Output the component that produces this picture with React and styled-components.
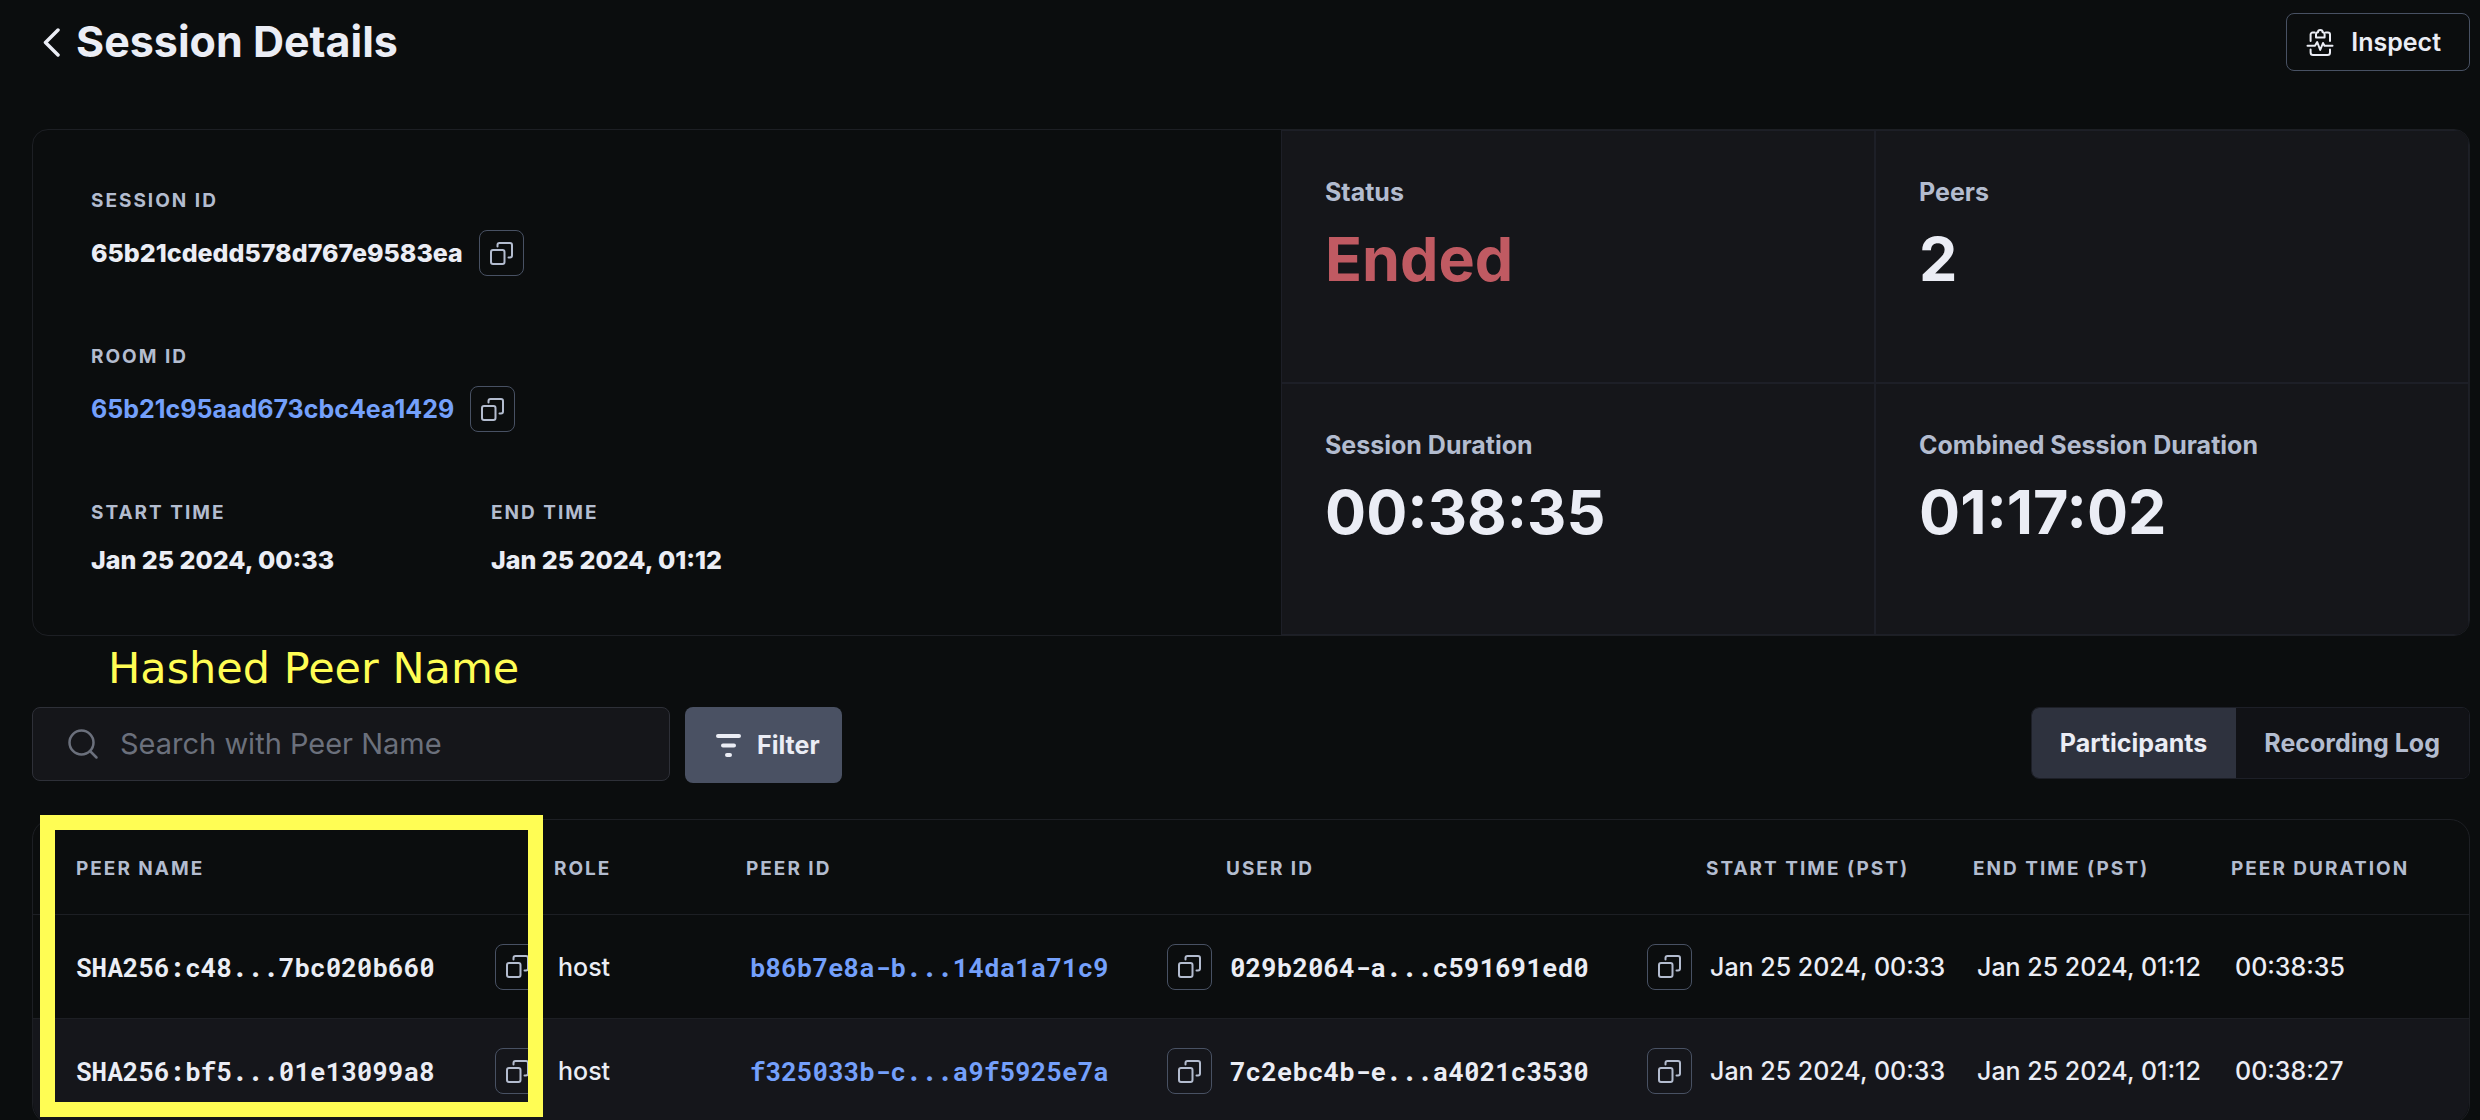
import React from "react";
import styled, { createGlobalStyle } from "styled-components";

const Global = createGlobalStyle`
  * { box-sizing: border-box; }
  body { margin: 0; background: #0b0d0e; }
  button, input { font: inherit; color: inherit; }
`;

const Page = styled.main`
  height: 100vh;
  overflow: auto;
  scrollbar-width: none;
  padding: 13px 10px 40px 32px;
  background: #0b0d0e;
  color: #ebedf5;
  font-family: Inter, sans-serif;
  font-size: 25px;
  line-height: 32px;
`;

const Header = styled.header`
  display: flex;
  justify-content: space-between;
  align-items: flex-start;
  margin-bottom: 58px;
`;

const TitleGroup = styled.div`
  display: flex;
  align-items: center;
  gap: 14px;
  padding-left: 10px;
`;

const BackButton = styled.button`
  display: flex;
  padding: 0;
  border: 0;
  background: none;
`;

const Title = styled.h1`
  margin: 0;
  font-size: 43px;
  line-height: 56px;
  font-weight: 700;
`;

const InspectButton = styled.button`
  display: flex;
  align-items: center;
  gap: 17px;
  height: 58px;
  padding: 0 28px 0 19px;
  border: 1px solid #485163;
  border-radius: 8px;
  background: none;
  font-weight: 600;
`;

const Summary = styled.section`
  display: grid;
  grid-template-columns: 1248fr 1188fr;
  border: 1px solid #1d1f24;
  border-radius: 16px;
  overflow: hidden;
`;

const Details = styled.div`
  display: flex;
  flex-direction: column;
  gap: 69px;
  padding: 59px 58px 57px;
`;

const Label = styled.div`
  font-size: 19px;
  line-height: 24px;
  font-weight: 700;
  letter-spacing: 2px;
  color: #b3bccf;
`;

const Value = styled.div`
  display: flex;
  align-items: center;
  gap: 16px;
  min-height: ${(p) => (p.$plain ? 36 : 46)}px;
  font-weight: 800;
`;

const Field = styled.div`
  display: flex;
  flex-direction: column;
  gap: 17px;
`;

const Times = styled.div`
  display: grid;
  grid-template-columns: 400px 400px;
`;

const Link = styled.a`
  color: #74a0fb;
  font-weight: 700;
  text-decoration: none;
`;

const CopyBox = styled.button`
  display: flex;
  flex: none;
  align-items: center;
  justify-content: center;
  width: 45px;
  height: 46px;
  padding: 0;
  border: 1px solid #485163;
  border-radius: 8px;
  background: none;
  color: #b3bccf;
`;

const Stats = styled.div`
  display: grid;
  grid-template-columns: 1fr 1fr;
`;

const Stat = styled.div`
  padding: 45px 43px;
  border: 1px solid #1d1f27;
  background: #15161a;
`;

const StatLabel = styled.div`
  font-weight: 700;
  color: #b3bccf;
`;

const StatValue = styled.div`
  margin-top: 11px;
  font-size: 61px;
  line-height: 80px;
  font-weight: 700;
  color: ${(p) => (p.$ended ? "#c05a62" : "#ebedf5")};
`;

const Caption = styled.p`
  margin: 5px 0 12px;
  padding-left: 76px;
  font-family: "DejaVu Sans", Verdana, sans-serif;
  font-size: 43px;
  line-height: 54px;
  color: #fffd54;
`;

const Toolbar = styled.div`
  display: flex;
  align-items: flex-start;
  gap: 15px;
  margin-bottom: 36px;
`;

const SearchBox = styled.label`
  display: flex;
  align-items: center;
  gap: 21px;
  width: 638px;
  height: 74px;
  padding: 0 34px;
  border: 1px solid #2e3038;
  border-radius: 8px;
  background: #15161a;
  color: #6b707c;
`;

const SearchInput = styled.input`
  flex: 1;
  min-width: 0;
  padding: 0;
  border: 0;
  outline: 0;
  background: none;
  font-size: 29px;
  &::placeholder {
    color: #6b707c;
    opacity: 1;
  }
`;

const FilterButton = styled.button`
  display: flex;
  align-items: center;
  gap: 16px;
  height: 76px;
  padding: 0 22px 0 31px;
  border: 0;
  border-radius: 8px;
  background: #4a5163;
  font-weight: 700;
`;

const Tabs = styled.div`
  display: flex;
  height: 72px;
  margin-left: auto;
  border: 1px solid #1d1f27;
  border-radius: 8px;
  overflow: hidden;
`;

const Tab = styled.button`
  padding: 0 29px 0 28px;
  border: 0;
  background: ${(p) => (p.$active ? "#2e323e" : "#111216")};
  color: ${(p) => (p.$active ? "#ebedf5" : "#b3bccf")};
  font-weight: 700;
`;

const TableCard = styled.section`
  position: relative;
  border: 1px solid #1d1f24;
  border-radius: 20px;
`;

const Table = styled.table`
  width: 100%;
  table-layout: fixed;
  border-collapse: separate;
  border-spacing: 0;
`;

const Th = styled.th`
  width: ${(p) => p.$width}px;
  height: 95px;
  padding: 4px 0 0 12px;
  border-bottom: 1px solid #1d1f24;
  text-align: left;
  white-space: nowrap;
  font-size: 19px;
  line-height: 24px;
  font-weight: 700;
  letter-spacing: 2px;
  color: #b3bccf;
  &:first-child {
    padding-left: 43px;
  }
`;

const Row = styled.tr`
  &:last-child td {
    border-bottom: 0;
    background: #15161b;
  }
  &:last-child td:first-child {
    border-bottom-left-radius: 20px;
  }
  &:last-child td:last-child {
    border-bottom-right-radius: 20px;
  }
`;

const Td = styled.td`
  height: 104px;
  padding: 0 2px 0 16px;
  border-bottom: 1px solid #1d1f24;
  white-space: nowrap;
  font-weight: 500;
  &:first-child {
    padding-left: 43px;
  }
`;

const Ident = styled.div`
  display: flex;
  align-items: center;
  justify-content: space-between;
  font-family: "Roboto Mono", "DejaVu Sans Mono", monospace;
  font-size: 26px;
  font-weight: 700;
`;

const Highlight = styled.div`
  position: absolute;
  top: -5px;
  left: 7px;
  width: 503px;
  height: 302px;
  border: 15px solid #fffd54;
  pointer-events: none;
`;

function CopyButton() {
  return (
    <CopyBox type="button" aria-label="Copy">
      <svg width="23" height="23" viewBox="0 0 23 23" fill="none" stroke="currentColor" strokeWidth="2" strokeLinecap="round" strokeLinejoin="round" aria-hidden="true">
        <rect x="1" y="8" width="13.500" height="14" rx="2" />
        <path d="M7.500 4.500V3a2 2 0 0 1 2-2H20a2 2 0 0 1 2 2v10.500a2 2 0 0 1-2 2h-1.500" />
      </svg>
    </CopyBox>
  );
}

const columns = [
  ["Peer Name", 509],
  ["Role", 192],
  ["Peer ID", 480],
  ["User ID", 480],
  ["Start Time (PST)", 267],
  ["End Time (PST)", 258],
  ["Peer Duration", 250],
];

const peers = [
  {
    name: "SHA256:c48...7bc020b660",
    role: "host",
    peerId: "b86b7e8a-b...14da1a71c9",
    userId: "029b2064-a...c591691ed0",
    start: "Jan 25 2024, 00:33",
    end: "Jan 25 2024, 01:12",
    duration: "00:38:35",
  },
  {
    name: "SHA256:bf5...01e13099a8",
    role: "host",
    peerId: "f325033b-c...a9f5925e7a",
    userId: "7c2ebc4b-e...a4021c3530",
    start: "Jan 25 2024, 00:33",
    end: "Jan 25 2024, 01:12",
    duration: "00:38:27",
  },
];

const stats = [
  ["Status", "Ended"],
  ["Peers", "2"],
  ["Session Duration", "00:38:35"],
  ["Combined Session Duration", "01:17:02"],
];

export default function App() {
  return (
    <Page>
      <Global />
      <Header>
        <TitleGroup>
          <BackButton type="button" aria-label="Back">
            <svg width="20" height="32" viewBox="0 0 20 32" fill="none" stroke="currentColor" strokeWidth="3.500" strokeLinecap="round" strokeLinejoin="round" aria-hidden="true">
              <path d="M16 5 3.500 17.500 16 30" />
            </svg>
          </BackButton>
          <Title>Session Details</Title>
        </TitleGroup>
        <InspectButton type="button">
          <svg width="28" height="30" viewBox="0 0 28 30" fill="none" stroke="currentColor" strokeWidth="2" strokeLinecap="round" strokeLinejoin="round" aria-hidden="true">
            <path d="M4.600 14V7.500a2 2 0 0 1 2-2h2.200M19.800 5.500h2.200a2 2 0 0 1 2 2V14M4.600 22.500v3a2.500 2.500 0 0 0 2.500 2.500h14.400a2.500 2.500 0 0 0 2.500-2.500v-3" />
            <path d="M10 10.500h8.600V7.500a2.200 2.200 0 0 0-2-2.200 2.300 2.300 0 0 0-4.600 0 2.200 2.200 0 0 0-2 2.200z" />
            <path d="M1.500 18.700H9l2.200-3.700 3 8 2.800-7 1.500 2.700h8" />
          </svg>
          Inspect
        </InspectButton>
      </Header>

      <Summary>
        <Details>
          <Field>
            <Label>SESSION ID</Label>
            <Value>
              65b21cdedd578d767e9583ea
              <CopyButton />
            </Value>
          </Field>
          <Field>
            <Label>ROOM ID</Label>
            <Value>
              <Link href="#room">65b21c95aad673cbc4ea1429</Link>
              <CopyButton />
            </Value>
          </Field>
          <Times>
            <Field>
              <Label>START TIME</Label>
              <Value $plain>Jan 25 2024, 00:33</Value>
            </Field>
            <Field>
              <Label>END TIME</Label>
              <Value $plain>Jan 25 2024, 01:12</Value>
            </Field>
          </Times>
        </Details>
        <Stats>
          {stats.map(([label, value]) => (
            <Stat key={label}>
              <StatLabel>{label}</StatLabel>
              <StatValue $ended={value === "Ended"}>{value}</StatValue>
            </Stat>
          ))}
        </Stats>
      </Summary>

      <Caption>Hashed Peer Name</Caption>

      <Toolbar>
        <SearchBox>
          <svg width="32" height="32" viewBox="0 0 32 32" fill="none" stroke="currentColor" strokeWidth="2.500" strokeLinecap="round" aria-hidden="true">
            <circle cx="14.500" cy="14.500" r="12" />
            <path d="m23.500 23.500 6 6" />
          </svg>
          <SearchInput type="text" placeholder="Search with Peer Name" aria-label="Search with Peer Name" />
        </SearchBox>
        <FilterButton type="button">
          <svg width="25" height="23" viewBox="0 0 25 23" fill="none" stroke="currentColor" strokeWidth="4" strokeLinecap="round" aria-hidden="true">
            <path d="M2 2h21M7 11.500h11M11 21h3" />
          </svg>
          Filter
        </FilterButton>
        <Tabs role="tablist">
          <Tab type="button" role="tab" aria-selected="true" $active>Participants</Tab>
          <Tab type="button" role="tab" aria-selected="false">Recording Log</Tab>
        </Tabs>
      </Toolbar>

      <TableCard>
        <Table>
          <thead>
            <tr>
              {columns.map(([name, width]) => (
                <Th key={name} scope="col" $width={width}>{name.toUpperCase()}</Th>
              ))}
            </tr>
          </thead>
          <tbody>
            {peers.map((peer) => (
              <Row key={peer.name}>
                <Td><Ident>{peer.name}<CopyButton /></Ident></Td>
                <Td>{peer.role}</Td>
                <Td><Ident><Link href="#peer">{peer.peerId}</Link><CopyButton /></Ident></Td>
                <Td><Ident>{peer.userId}<CopyButton /></Ident></Td>
                <Td>{peer.start}</Td>
                <Td>{peer.end}</Td>
                <Td>{peer.duration}</Td>
              </Row>
            ))}
          </tbody>
        </Table>
        <Highlight />
      </TableCard>
    </Page>
  );
}
